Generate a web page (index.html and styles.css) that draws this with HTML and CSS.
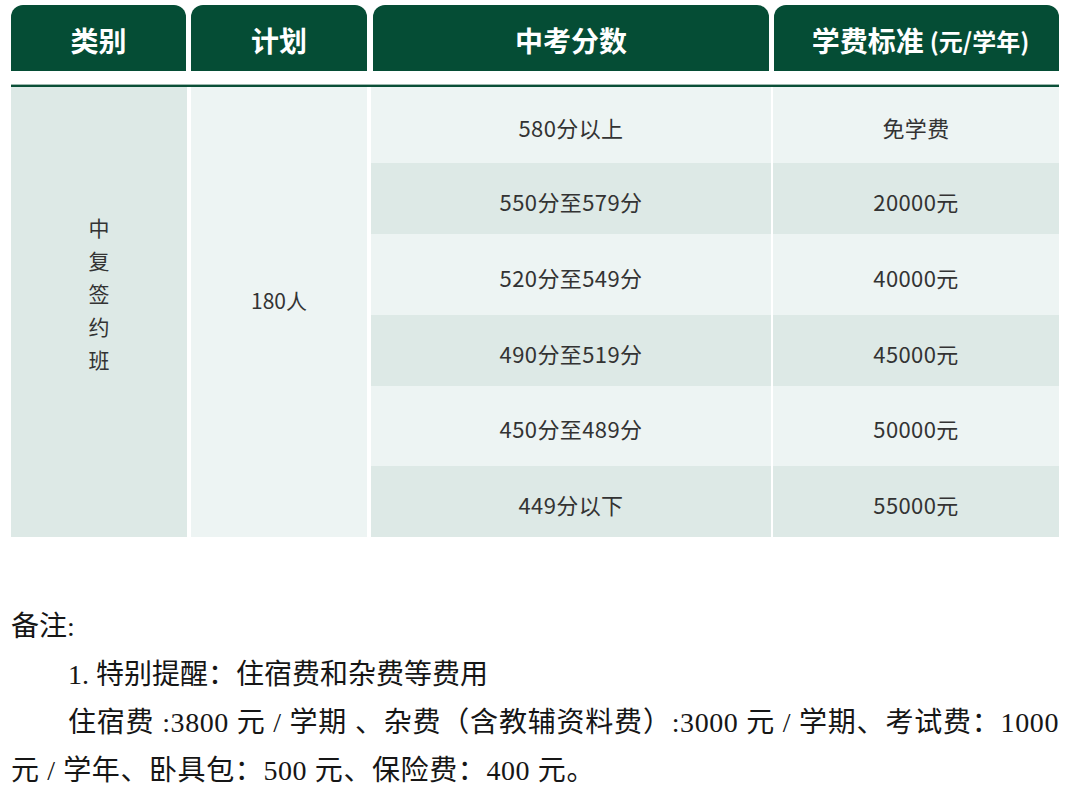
FILE: index.html
```html
<!DOCTYPE html>
<html lang="zh-CN">
<head>
<meta charset="utf-8">
<title>收费标准</title>
<link rel="stylesheet" href="styles.css">
</head>
<body>
<div class="page">
  <div class="thead">
    <div class="th c1">类别</div>
    <div class="th c2">计划</div>
    <div class="th c3">中考分数</div>
    <div class="th c4">学费标准<span class="unit">(元/学年)</span></div>
  </div>
  <div class="rule"></div>
  <div class="tbody">
    <div class="cell c1 dark vtext">中<br>复<br>签<br>约<br>班</div>
    <div class="cell c2 light plan">180人</div>
    <div class="rows">
      <div class="row light r1"><div class="cell score">580分以上</div><div class="cell fee">免学费</div></div>
      <div class="row dark r2"><div class="cell score">550分至579分</div><div class="cell fee">20000元</div></div>
      <div class="row light r3"><div class="cell score">520分至549分</div><div class="cell fee">40000元</div></div>
      <div class="row dark r4"><div class="cell score">490分至519分</div><div class="cell fee">45000元</div></div>
      <div class="row light r5"><div class="cell score">450分至489分</div><div class="cell fee">50000元</div></div>
      <div class="row dark r6"><div class="cell score">449分以下</div><div class="cell fee">55000元</div></div>
    </div>
  </div>
  <div class="notes">
    <p class="note-title">备注:</p>
    <p class="note-line">1. 特别提醒：住宿费和杂费等费用</p>
    <p class="note-line note-fees">住宿费 :3800 元 / 学期 、杂费（含教辅资料费）:3000 元 / 学期、考试费：1000 元 / 学年、卧具包：500 元、保险费：400 元。</p>
  </div>
</div>
</body>
</html>
```
FILE: styles.css
```css
html, body {
  margin: 0;
  padding: 0;
  background: #ffffff;
}

.page {
  padding: 5px 8px 0 11px;
  width: 1048px;
  font-family: "Noto Sans CJK SC", "Noto Sans", sans-serif;
}

.thead {
  display: flex;
  gap: 5px;
  height: 66px;
}

.th {
  background: #054d35;
  color: #ffffff;
  border-radius: 12px 12px 0 0;
  display: flex;
  align-items: center;
  justify-content: center;
  font-size: 28px;
  font-weight: 700;
  padding-top: 4px;
  box-sizing: border-box;
}

.th.c1 { width: 175px; }
.th.c2 { width: 176px; margin-right: 1px; }
.th.c3 { width: 396px; }
.th.c4 { width: 285px; padding-left: 8px; }

.th .unit {
  font-size: 24px;
  font-weight: 700;
  margin-left: 6px;
}

.rule {
  margin-top: 13px;
  height: 3px;
  background: #0a4f37;
  border-top: 1px solid #9db8ae;
  box-sizing: border-box;
}

.tbody {
  display: flex;
  gap: 4px;
  height: 450px;
  color: #333333;
  font-size: 22px;
}

.dark { background: #dde9e6; }
.light { background: #edf4f3; }

.cell {
  display: flex;
  align-items: center;
  justify-content: center;
  box-sizing: border-box;
}

.tbody > .c1 {
  width: 176px;
  line-height: 33px;
  padding-bottom: 38px;
  text-align: center;
  font-size: 21px;
}

.tbody > .c2 {
  width: 176px;
  padding-bottom: 24px;
  font-size: 21px;
}

.rows {
  width: 688px;
  display: flex;
  flex-direction: column;
}

.row {
  display: flex;
  gap: 2px;
  background: #ffffff;
}

.row .cell {
  padding-top: 4px;
  letter-spacing: 0.4px;
}

.row .score { width: 400px; }
.row .fee { width: 286px; }

.r1 { height: 76px; }
.r2 { height: 71px; }
.r3 { height: 81px; }
.r4 { height: 71px; }
.r5 { height: 80px; }
.r6 { height: 71px; }

.row.light .cell { background: #edf4f3; }
.row.dark .cell { background: #dde9e6; }

.notes {
  margin-top: 66px;
  color: #161616;
  font-family: "Liberation Serif", "Noto Sans CJK SC", serif;
  font-size: 28px;
}

.notes p {
  margin: 0;
  line-height: 48px;
}

.note-line {
  text-indent: 57px;
  text-align: justify;
}

.note-fees {
  letter-spacing: 0.6px;
}
```
